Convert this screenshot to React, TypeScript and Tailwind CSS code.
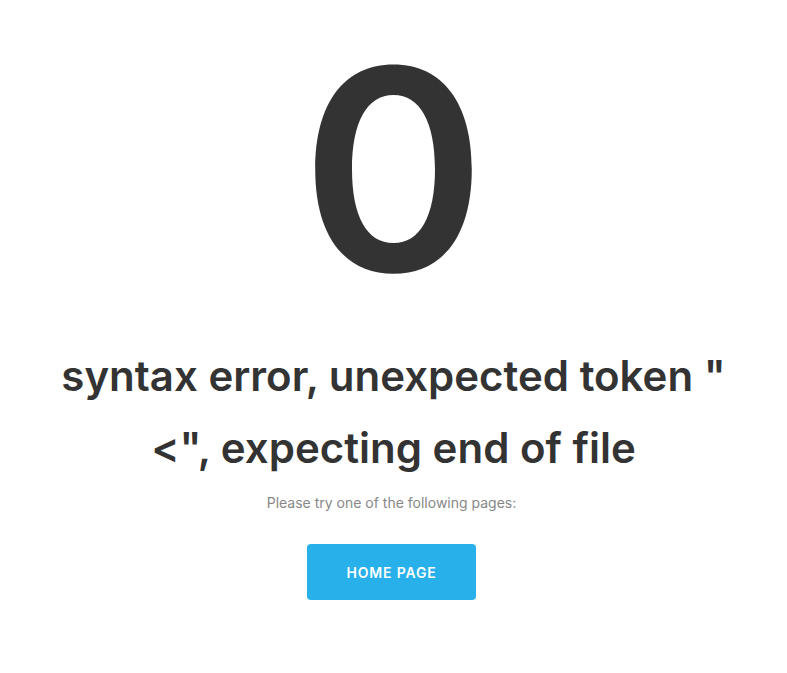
export default function App() {
  return (
    <div className="min-h-screen bg-white flex flex-col items-center" style={{ fontFamily: "Inter, 'Noto Sans', sans-serif" }}>
      <div className="mt-[30px] text-[280px] leading-[280px] font-semibold text-[#333333]">0</div>
      <h1 className="mt-[30px] text-center text-[42px] leading-[72px] font-semibold text-[#333333]">
        syntax error, unexpected token "<br />&lt;", expecting end of file
      </h1>
      <p className="mt-[9px] mr-[4px] text-[14px] leading-[20px] text-[#888888]">Please try one of the following pages:</p>
      <a className="mt-[31px] mr-[4px] w-[169px] h-[56px] flex items-center justify-center rounded-[4px] bg-[#27b0ea] text-white text-[14px] font-semibold tracking-[0.06em]">HOME PAGE</a>
    </div>
  );
}
